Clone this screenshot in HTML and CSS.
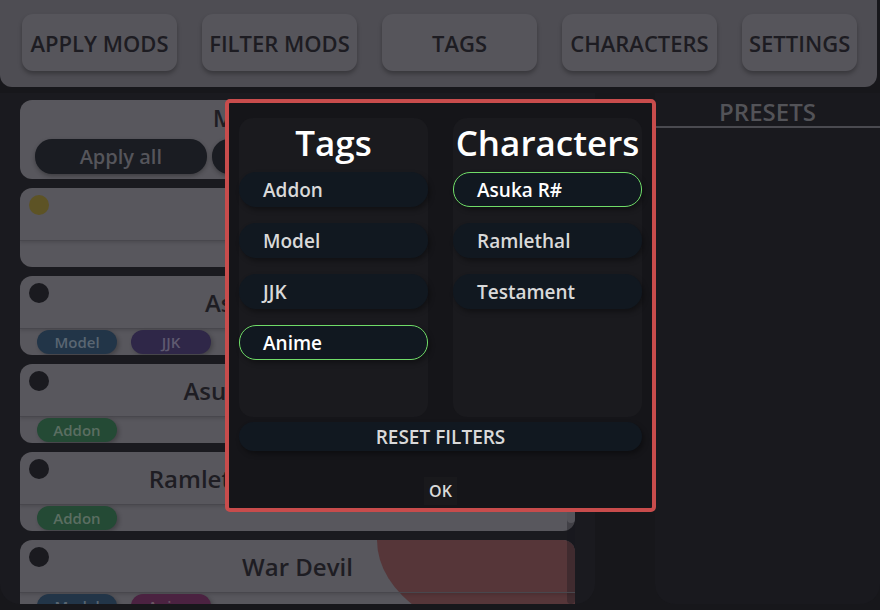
FILE: index.html
```html
<!DOCTYPE html>
<html lang="en">
<head>
<meta charset="utf-8">
<title>Mod Manager</title>
<link rel="stylesheet" href="styles.css">
</head>
<body>
<div class="app">
  <header class="topbar">
    <button class="top-btn">APPLY MODS</button>
    <button class="top-btn">FILTER MODS</button>
    <button class="top-btn">TAGS</button>
    <button class="top-btn">CHARACTERS</button>
    <button class="top-btn top-btn-compact">SETTINGS</button>
  </header>

  <main class="content">
    <section class="mods-panel">
      <div class="mods-list">
        <div class="card card-head">
          <div class="head-title">Mods Installed</div>
          <div class="head-actions">
            <button class="head-btn">Apply all</button>
            <button class="head-btn">Disable all</button>
            <button class="head-btn">Refresh</button>
          </div>
        </div>

        <div class="card">
          <span class="dot dot-yellow"></span>
          <div class="card-top"><span class="card-title">New Mod</span></div>
          <div class="card-tags"></div>
        </div>

        <div class="card">
          <span class="dot"></span>
          <div class="card-top"><span class="card-title">Asuka Gojo Skin</span></div>
          <div class="card-tags">
            <span class="tag tag-model">Model</span>
            <span class="tag tag-jjk">JJK</span>
          </div>
        </div>

        <div class="card">
          <span class="dot"></span>
          <div class="card-top"><span class="card-title">Asuka Casual Outfit</span></div>
          <div class="card-tags">
            <span class="tag tag-addon">Addon</span>
          </div>
        </div>

        <div class="card">
          <span class="dot"></span>
          <div class="card-top"><span class="card-title">Ramlethal Summer Outfit</span></div>
          <div class="card-tags">
            <span class="tag tag-addon">Addon</span>
          </div>
        </div>

        <div class="card">
          <span class="dot"></span>
          <span class="blob"></span>
          <div class="card-top"><span class="card-title">War Devil</span></div>
          <div class="card-tags">
            <span class="tag tag-model">Model</span>
            <span class="tag tag-anime">Anime</span>
          </div>
        </div>
      </div>
      <div class="scrollbar"><div class="grabber"></div></div>
    </section>

    <aside class="presets">
      <h2 class="presets-title">PRESETS</h2>
    </aside>
  </main>

  <div class="modal">
    <div class="columns">
      <div class="column">
        <h1 class="col-title">Tags</h1>
        <div class="opt-list">
          <div class="opt">Addon</div>
          <div class="opt">Model</div>
          <div class="opt">JJK</div>
          <div class="opt selected">Anime</div>
        </div>
      </div>
      <div class="column">
        <h1 class="col-title">Characters</h1>
        <div class="opt-list">
          <div class="opt selected">Asuka R#</div>
          <div class="opt">Ramlethal</div>
          <div class="opt">Testament</div>
        </div>
      </div>
    </div>
    <div class="reset">RESET FILTERS</div>
    <div class="ok-row"><span class="ok">OK</span></div>
  </div>
</div>
</body>
</html>
```

FILE: styles.css
```css
* { box-sizing: border-box; }

html, body {
  margin: 0;
  padding: 0;
}

body {
  width: 880px;
  height: 610px;
  overflow: hidden;
  background: #17171b;
  font-family: "Open Sans", "Noto Sans", sans-serif;
  font-weight: 600;
}

.app {
  position: relative;
  width: 880px;
  height: 610px;
  display: flex;
  flex-direction: column;
}

/* ---------- top bar ---------- */
.topbar {
  flex: none;
  width: 877px;
  height: 87px;
  background: #4e4d53;
  border-radius: 0 0 12px 12px;
  display: flex;
  align-items: flex-start;
  gap: 25px;
  padding: 14px 0 0 22px;
}

.top-btn {
  flex: none;
  min-width: 155px;
  height: 57px;
  padding: 0 7px;
  border: none;
  border-radius: 11px;
  background: #56555b;
  color: #1d1c22;
  font-family: "Open Sans", sans-serif;
  font-weight: 600;
  font-size: 22px;
  box-shadow: 0 3px 4px rgba(0, 0, 0, 0.28);
}

.top-btn-compact {
  min-width: 0;
}

/* ---------- content ---------- */
.content {
  flex: 1;
  min-height: 0;
  display: flex;
  padding-top: 6px;
  padding-bottom: 6px;
}

.mods-panel {
  position: relative;
  flex: none;
  width: 595px;
  background: #1a1a1f;
  border-radius: 0 0 20px 20px;
  padding: 7px 20px 0 20px;
  overflow: hidden;
}

.mods-list {
  width: 555px;
  height: 100%;
  display: flex;
  flex-direction: column;
  gap: 9px;
  overflow: hidden;
}

.card {
  position: relative;
  flex: none;
  height: 79px;
  background: #58575d;
  border-radius: 12px;
  overflow: hidden;
  display: flex;
  flex-direction: column;
}

.card-head {
  padding: 2px 15px 0;
}

.head-title {
  height: 32px;
  line-height: 32px;
  text-align: center;
  font-size: 24px;
  color: #1e1d23;
  white-space: nowrap;
}

.head-actions {
  margin-top: 5px;
  display: grid;
  grid-template-columns: repeat(3, 1fr);
  gap: 5px;
}

.head-btn {
  height: 35px;
  border: none;
  border-radius: 17px;
  background: #1a1c22;
  color: #55555b;
  font-family: "Open Sans", sans-serif;
  font-weight: 600;
  font-size: 20px;
  box-shadow: 0 2px 4px rgba(0, 0, 0, 0.3);
}

.dot {
  position: absolute;
  left: 9px;
  top: 7px;
  width: 20px;
  height: 20px;
  border-radius: 50%;
  background: #1a1a1f;
  z-index: 2;
}

.dot-yellow { background: #5d5325; }

.blob {
  position: absolute;
  left: 357px;
  top: -100px;
  width: 300px;
  height: 200px;
  border-radius: 50%;
  background: #563639;
  z-index: 0;
}

.card-top {
  position: relative;
  z-index: 1;
  height: 53px;
  display: flex;
  align-items: center;
  justify-content: center;
  border-bottom: 1px solid #48474d;
  box-shadow: 0 2px 3px rgba(0, 0, 0, 0.12);
}

.card-title {
  font-size: 24px;
  color: #1e1d23;
  white-space: nowrap;
}

.card-tags {
  position: relative;
  z-index: 1;
  flex: 1;
  display: flex;
  align-items: flex-end;
  gap: 14px;
  padding: 0 0 1px 17px;
}

.tag {
  width: 80px;
  height: 24px;
  border-radius: 12px;
  display: flex;
  align-items: center;
  justify-content: center;
  font-size: 15px;
  box-shadow: 2px 2px 4px rgba(0, 0, 0, 0.25);
}

.tag-model { background: #223548; color: #5a6672; }
.tag-jjk   { background: #2f2748; color: #5f5a70; }
.tag-addon { background: #244a35; color: #5b6e62; }
.tag-anime { background: #4b2241; color: #6a5664; }

.scrollbar {
  position: absolute;
  left: 567px;
  top: 7px;
  width: 8px;
  bottom: 0;
  background: rgba(24, 24, 28, 0.35);
  border-radius: 4px;
}

.grabber {
  height: 423px;
  border-radius: 4px;
  background: #55545a;
}

/* ---------- presets ---------- */
.presets {
  margin-left: 60px;
  flex: 1;
  background: #19191e;
  border-radius: 0 0 20px 20px;
}

.presets-title {
  margin: 0;
  height: 35px;
  line-height: 38px;
  text-align: center;
  font-size: 24px;
  font-weight: 600;
  color: #535358;
  border-bottom: 2px solid #4a4a50;
}

/* ---------- modal ---------- */
.modal {
  position: absolute;
  left: 225px;
  top: 99px;
  width: 431px;
  height: 413px;
  border: 4px solid #c84c4c;
  border-radius: 5px;
  background: #151519;
  padding: 15px 10px 3px;
  display: flex;
  flex-direction: column;
  z-index: 10;
}

.columns {
  display: grid;
  grid-template-columns: 1fr 1fr;
  gap: 25px;
  height: 300px;
}

.column {
  background: #1a1a1e;
  border-radius: 14px;
}

.col-title {
  margin: 0;
  height: 44px;
  line-height: 49px;
  text-align: center;
  font-size: 35px;
  font-weight: 600;
  color: #ffffff;
}

.opt-list {
  margin-top: 10px;
  display: flex;
  flex-direction: column;
  gap: 16px;
}

.opt {
  height: 35px;
  border-radius: 17px;
  background: #111820;
  color: #d9d9d9;
  font-size: 19px;
  display: flex;
  align-items: center;
  padding-left: 23px;
  border: 1px solid transparent;
  box-shadow: 2px 3px 5px rgba(0, 0, 0, 0.35);
}

.opt.selected {
  border-color: #70dc68;
  color: #ffffff;
}

.reset {
  margin-top: 5px;
  height: 29px;
  border-radius: 15px;
  background: #111820;
  color: #d9d9d9;
  font-size: 19px;
  display: flex;
  align-items: center;
  justify-content: center;
  box-shadow: 2px 3px 5px rgba(0, 0, 0, 0.35);
}

.ok-row {
  margin-top: 26px;
  display: flex;
  justify-content: center;
}

.ok {
  height: 28px;
  padding: 0 5px;
  display: flex;
  align-items: center;
  background: #19191c;
  color: #d9d9d9;
  font-size: 16px;
}
```
